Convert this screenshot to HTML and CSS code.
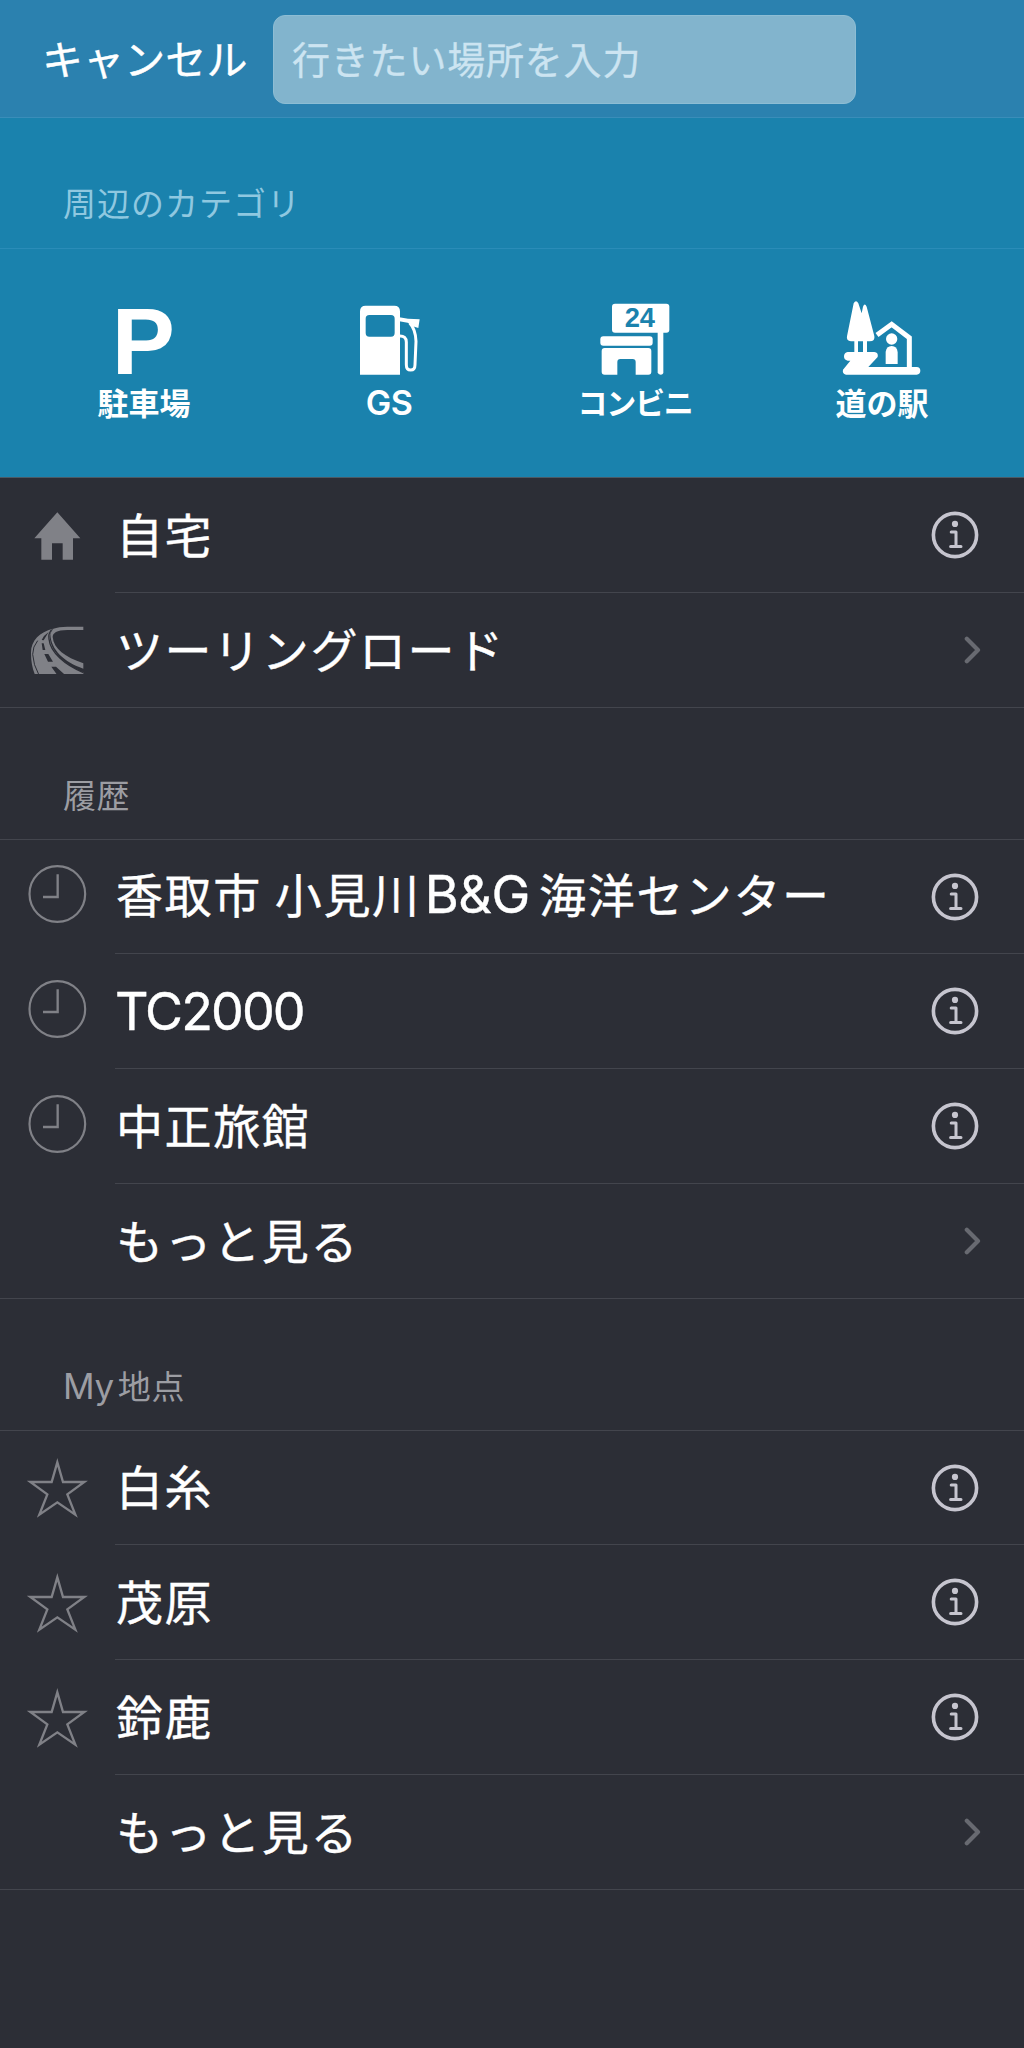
FILE: index.html
```html
<!DOCTYPE html>
<html lang="ja">
<head>
    <meta charset="UTF-8">
    <meta name="viewport" content="width=device-width, initial-scale=1.0">
    <title>目的地検索</title>
    <link rel="stylesheet" href="styles.css">
</head>
<body>
    <!-- 共通アイコン -->
    <svg class="sprite" width="0" height="0">
        <symbol id="info" viewBox="0 0 48 48">
            <circle cx="24" cy="24" r="21.6" fill="none" stroke="currentColor" stroke-width="3.6"/>
            <circle cx="24" cy="12.9" r="3.1" fill="currentColor"/>
            <path d="M20.2 21H25v14.6M19.6 35.6h10.4" fill="none" stroke="currentColor" stroke-width="3" stroke-linecap="round" stroke-linejoin="round"/>
        </symbol>
        <symbol id="chevron" viewBox="0 0 18 28">
            <path d="M3.8 2.8L15 14 3.8 25.2" fill="none" stroke="currentColor" stroke-width="4.2" stroke-linecap="round" stroke-linejoin="round"/>
        </symbol>
        <symbol id="clock" viewBox="75 313 192 192">
            <circle cx="172" cy="400" r="83.5" fill="none" stroke="currentColor" stroke-width="6.5"/>
            <path d="M173 341v68h-44" fill="none" stroke="currentColor" stroke-width="7"/>
        </symbol>
        <symbol id="star" viewBox="75 856 192 192">
            <path d="M172 875L189 934H253L202 971 226 1032 172 995 118 1032 142 971 91 934H155Z" fill="none" stroke="currentColor" stroke-width="7"/>
        </symbol>
    </svg>

    <header class="search-bar">
        <a class="cancel">キャンセル</a>
        <div class="search-field">行きたい場所を入力</div>
    </header>

    <section class="nearby">
        <h2 class="section-title">周辺のカテゴリ</h2>
        <div class="categories">
            <div class="category">
                <svg width="90" height="80" viewBox="57 54 270 240">
                    <text class="parking" x="95" y="283">P</text>
                </svg>
                <span>駐車場</span>
            </div>
            <div class="category gs">
                <svg width="90" height="80" viewBox="792 54 270 240">
                    <path fill="#fff" fill-rule="evenodd" d="M840 284V94q0-17 17-17h86q17 0 17 17v190zM868 105q-11 0-11 11v43q0 11 11 11h65q11 0 11-11v-43q0-11-11-11z"/>
                    <path fill="#fff" d="M958 112l26 4 35 2-4 26-12-4-20-12-25-4z"/>
                    <path fill="none" stroke="#fff" stroke-width="9" d="M958 168q21-1 21 18v68q0 16 13 16t13-16l3-70q-1-36-19-55"/>
                </svg>
                <span class="latin">GS</span>
            </div>
            <div class="category kana">
                <svg width="90" height="80" viewBox="92 54 270 240">
                    <rect x="158" y="71" width="172" height="87" rx="9" fill="#fff"/>
                    <text class="open-24" x="241" y="141">24</text>
                    <path fill="#fff" d="M295 150h17v127q0 7-8 7t-9-7z"/>
                    <rect x="123" y="169" width="157" height="28" rx="9" fill="#fff"/>
                    <path fill="#fff" d="M136 204h131q9 0 9 9v62q0 9-9 9h-38v-38q0-9-9-9h-37q-9 0-9 9v38h-38q-9 0-9-9v-62q0-9 9-9z"/>
                </svg>
                <span>コンビニ</span>
            </div>
            <div class="category">
                <svg width="90" height="80" viewBox="831 54 270 240">
                    <path fill="#fff" d="M881 70q7-13 14 0l10 30 4-20q5-13 11 0l23 88q3 16-14 16h-8v32h22q13 2 10 15l-28 30h145q11 1 11 11t-11 12H858q-12-3-9-15l22-27h-8q-11-2-11-13t11-13h20v-32h-10q-15-1-12-15zM894 184v32h15v-32z" fill-rule="evenodd"/>
                    <path fill="none" stroke="#fff" stroke-width="15" d="M951 165l44-32 53 40v95"/>
                    <circle cx="995" cy="177" r="17" fill="#fff"/>
                    <path fill="#fff" d="M977 252v-36q2-18 18-18t18 18v36z"/>
                </svg>
                <span>道の駅</span>
            </div>
        </div>
    </section>

    <ul class="list places">
        <li class="row">
            <svg class="icon" viewBox="75 101 192 192">
                <path fill="currentColor" d="M172 126L241 204H219V268H188V219H156V268H124V204H103Z"/>
            </svg>
            <div class="cell"><span class="name">自宅</span><svg class="info"><use href="#info"/></svg></div>
        </li>
        <li class="row">
            <svg class="icon" viewBox="75 444 192 192">
                <path fill="currentColor" d="M250 470V480H202C170 480 158 490 158 501C161 536 195 561 250 580V596C193 577 153 540 151 493Q153 483 160 476Q176 470 202 470Z"/>
                <path fill="currentColor" d="M158 476C120 486 93 510 93 548Q93 585 104 612H250V607C190 581 152 545 149 500Q150 487 158 476Z"/>
                <path fill="none" stroke="#2c2e36" stroke-width="3" d="M113 512Q98 530 98 553 100 585 116 613"/>
                <path fill="none" stroke="#2c2e36" stroke-width="4" d="M155 479Q144 491 147 507C151 548 195 585 250 608"/>
                <path fill="#2c2e36" d="M146 486l-15 25-6-1q7-15 21-24zM125 520h6l5 20h-8zM133 552h12l14 23h-15zM154 590h14l25 23h-23z"/>
            </svg>
            <div class="cell"><span class="name">ツーリングロード</span><svg class="chevron"><use href="#chevron"/></svg></div>
        </li>
    </ul>

    <h2 class="section-title">履歴</h2>
    <ul class="list">
        <li class="row">
            <svg class="icon"><use href="#clock"/></svg>
            <div class="cell"><span class="name">香取市<span class="space"></span>小見川<span class="latin inner">B&amp;G</span>海洋センター</span><svg class="info"><use href="#info"/></svg></div>
        </li>
        <li class="row">
            <svg class="icon"><use href="#clock"/></svg>
            <div class="cell"><span class="name latin">TC2000</span><svg class="info"><use href="#info"/></svg></div>
        </li>
        <li class="row">
            <svg class="icon"><use href="#clock"/></svg>
            <div class="cell"><span class="name">中正旅館</span><svg class="info"><use href="#info"/></svg></div>
        </li>
        <li class="row">
            <div class="icon"></div>
            <div class="cell"><span class="name">もっと見る</span><svg class="chevron"><use href="#chevron"/></svg></div>
        </li>
    </ul>

    <h2 class="section-title"><span class="latin">My</span>地点</h2>
    <ul class="list">
        <li class="row">
            <svg class="icon"><use href="#star"/></svg>
            <div class="cell"><span class="name">白糸</span><svg class="info"><use href="#info"/></svg></div>
        </li>
        <li class="row">
            <svg class="icon"><use href="#star"/></svg>
            <div class="cell"><span class="name">茂原</span><svg class="info"><use href="#info"/></svg></div>
        </li>
        <li class="row">
            <svg class="icon"><use href="#star"/></svg>
            <div class="cell"><span class="name">鈴鹿</span><svg class="info"><use href="#info"/></svg></div>
        </li>
        <li class="row">
            <div class="icon"></div>
            <div class="cell"><span class="name">もっと見る</span><svg class="chevron"><use href="#chevron"/></svg></div>
        </li>
    </ul>
</body>
</html>
```
FILE: styles.css
```css
* {
    box-sizing: border-box;
}
body {
    margin: 0;
    min-height: 2048px;
    background-color: #2c2e36;
    color: #fff;
    font-family: "Noto Sans CJK JP", sans-serif;
    white-space: nowrap;
}
svg {
    display: block;
    flex-shrink: 0;
    overflow: visible;
}
.sprite {
    position: absolute;
}
.latin {
    font-family: Inter, sans-serif;
}

/* 検索バー */
.search-bar {
    display: flex;
    align-items: flex-start;
    height: 118px;
    padding: 15px 0 0 42px;
    background-color: #2b81af;
    border-bottom: 1px solid #3a8db9;
}
.cancel {
    width: 231px;
    font-size: 41px;
    line-height: 84px;
    letter-spacing: 0.1px;
    -webkit-text-stroke: 0.4px;
}
.search-field {
    width: 583px;
    height: 89px;
    padding-left: 18px;
    border: 1px solid #8dbdd4;
    border-radius: 12px;
    background-color: #82b4cd;
    color: #cce4f1;
    font-size: 38px;
    line-height: 84px;
    letter-spacing: 0.8px;
    -webkit-text-stroke: 0.3px;
}

/* 周辺のカテゴリ */
.section-title {
    height: 132px;
    margin: 0;
    padding: 62px 0 0 63px;
    border-bottom: 1px solid #43454d;
    color: #9c9da3;
    font-size: 33px;
    font-weight: 400;
    line-height: 48px;
    letter-spacing: 0.6px;
}
.section-title .latin {
    margin-right: 4px;
    font-size: 35px;
    letter-spacing: -0.3px;
}
.nearby {
    height: 360px;
    background-color: #1a82ad;
    border-bottom: 1px solid #4b5a65;
}
.nearby .section-title {
    height: 131px;
    padding-top: 60px;
    border-color: #2a8cb8;
    color: #8fc8e0;
    letter-spacing: 1px;
}
.categories {
    display: grid;
    grid-template-columns: repeat(4, 246px);
    padding: 49px 0 0 21px;
}
.category {
    display: flex;
    flex-direction: column;
    align-items: center;
    font-size: 31px;
    font-weight: 700;
    line-height: 47px;
}
.gs,
.kana {
    margin-left: -1px;
    margin-right: 1px;
}
.kana {
    font-size: 30px;
    letter-spacing: -1.2px;
}
.category .latin {
    font-weight: 600;
    font-size: 34px;
    line-height: 49px;
    letter-spacing: -0.6px;
}
.parking {
    fill: #fff;
    font: bold 284px "Liberation Sans", sans-serif;
}
.open-24 {
    fill: #1a82ad;
    font: bold 82px "Liberation Sans", sans-serif;
    text-anchor: middle;
}

/* リスト */
.list {
    margin: 0;
    padding: 0;
    border-bottom: 1px solid #43454d;
    list-style: none;
}
.row {
    display: flex;
    align-items: center;
    height: 115px;
    padding-left: 25px;
}
.row:first-child {
    height: 114px;
}
.places .row:first-child {
    height: 115px;
}
.row:last-child {
    height: 114px;
}
.icon {
    flex-shrink: 0;
    width: 64px;
    height: 64px;
    margin-right: 26px;
    color: #808187;
}
.cell {
    display: flex;
    flex: 1;
    align-items: center;
    justify-content: space-between;
    height: 100%;
    padding-right: 45px;
    border-bottom: 1px solid #43454d;
}
.row:last-child .cell {
    border-bottom: none;
}
.name {
    padding: 0 0 5px 1px;
    font-size: 47px;
    line-height: 70px;
    letter-spacing: 1.6px;
    -webkit-text-stroke: 0.4px;
}
.name.latin,
.name .inner {
    font-size: 52px;
    letter-spacing: -1.9px;
}
.name.latin {
    padding: 2px 0 0;
}
.name .inner {
    margin: 0 9px 0 4px;
    letter-spacing: -0.3px;
}
.space {
    display: inline-block;
    width: 13px;
}
.info {
    width: 48px;
    height: 48px;
    color: #c6c5cf;
}
.chevron {
    width: 18px;
    height: 28px;
    margin-right: -2px;
    color: #686a71;
}
```
